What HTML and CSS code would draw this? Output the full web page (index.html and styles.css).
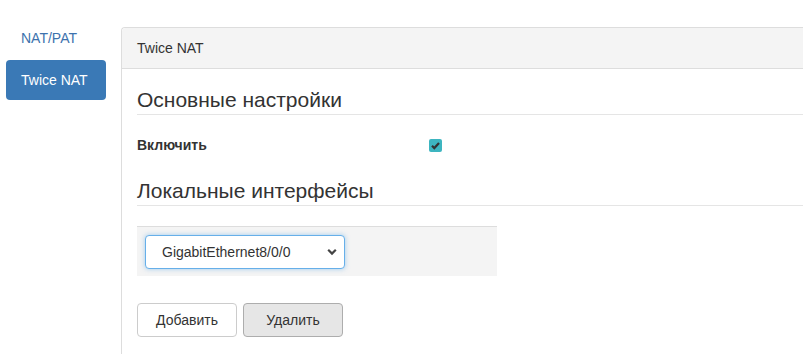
FILE: index.html
```html
<!DOCTYPE html>
<html lang="ru">
<head>
    <meta charset="UTF-8">
    <title>Twice NAT</title>
    <link rel="stylesheet" href="styles.css">
</head>
<body>
    <div class="layout">
        <nav class="sidebar">
            <a class="nav-link" href="#">NAT/PAT</a>
            <a class="nav-link active" href="#">Twice NAT</a>
        </nav>

        <div class="panel">
            <div class="panel-heading">Twice NAT</div>
            <div class="panel-body">
                <h3 class="section-title">Основные настройки</h3>
                <div class="form-row">
                    <label class="form-label">Включить</label>
                    <span class="checkbox checked">
                        <svg viewBox="0 0 13 13" width="13" height="13">
                            <path d="M3 6.8 L5.3 9.1 L10 3.9" fill="none" stroke="#333" stroke-width="2.2"/>
                        </svg>
                    </span>
                </div>

                <h3 class="section-title">Локальные интерфейсы</h3>
                <div class="iface-box">
                    <span class="select-wrap">
                        <select class="form-select">
                            <option>GigabitEthernet8/0/0</option>
                        </select>
                        <svg class="select-arrow" viewBox="0 0 10 8" width="10" height="8">
                            <path d="M1.2 1.8 L5 5.6 L8.8 1.8" fill="none" stroke="#444" stroke-width="2.2"/>
                        </svg>
                    </span>
                </div>

                <div class="actions">
                    <button class="btn">Добавить</button>
                    <button class="btn btn-pressed">Удалить</button>
                </div>
            </div>
        </div>
    </div>
</body>
</html>
```

FILE: styles.css
```css
/* Общие стили */
body {
    margin: 0;
    font-family: 'Liberation Sans', Arial, sans-serif;
    font-size: 14px;
    color: #333;
    background: #fff;
}

.layout {
    display: flex;
    align-items: flex-start;
}

/* --- Боковое меню --- */
.sidebar {
    width: 115px;
    padding: 28px 0 0 6px;
    display: flex;
    flex-direction: column;
    flex-shrink: 0;
}
.nav-link {
    display: block;
    width: 100px;
    box-sizing: border-box;
    padding: 0 15px;
    line-height: 20px;
    font-size: 14px;
    color: #3d72ad;
    text-decoration: none;
}
.nav-link.active {
    margin-top: 12px;
    line-height: 40px;
    background: #3a79b6;
    color: #fff;
    border-radius: 4px;
}

/* --- Панель --- */
.panel {
    flex: 1;
    margin-top: 27px;
    min-height: 327px;
    border-left: 1px solid #ddd;
    border-top: 1px solid #ddd;
    border-top-left-radius: 4px;
}
.panel-heading {
    height: 40px;
    line-height: 40px;
    padding: 0 15px;
    font-size: 14px;
    background: #f4f4f4;
    border-bottom: 1px solid #ddd;
    border-top-left-radius: 4px;
}
.panel-body {
    padding: 0 0 0 15px;
}

.section-title {
    margin: 20px 0 0;
    padding-bottom: 3px;
    font-size: 21px;
    font-weight: normal;
    line-height: 22px;
    border-bottom: 1px solid #e5e5e5;
}

.form-row {
    display: flex;
    align-items: center;
    height: 20px;
    margin: 20px 0 25px;
}
.form-label {
    width: 292px;
    font-size: 14px;
    font-weight: bold;
}
.checkbox {
    width: 13px;
    height: 13px;
    display: flex;
    border-radius: 2px;
    background: #3db5c0;
}

/* Блок выбора интерфейса */
.iface-box {
    width: 344px;
    margin-top: 20px;
    padding: 8px;
    padding-bottom: 7px;
    background: #f4f4f4;
    border-top: 1px solid #ddd;
}
.select-wrap {
    position: relative;
    display: inline-block;
    vertical-align: top;
}
.form-select {
    appearance: none;
    -webkit-appearance: none;
    display: block;
    width: 200px;
    height: 34px;
    padding: 0 0 0 16px;
    font-family: inherit;
    font-size: 14px;
    color: #333;
    background: #fff;
    border: 1px solid #66afe9;
    border-radius: 4px;
    box-shadow: 0 0 5px rgba(102, 175, 233, 0.6);
    outline: none;
}
.select-arrow {
    position: absolute;
    right: 8px;
    top: 13px;
    pointer-events: none;
}

/* Кнопки */
.actions {
    display: flex;
    gap: 6px;
    margin-top: 27px;
}
.btn {
    width: 100px;
    height: 34px;
    font-family: inherit;
    font-size: 14px;
    color: #333;
    background: #fff;
    border: 1px solid #ccc;
    border-radius: 4px;
    cursor: pointer;
}
.btn-pressed {
    background: #e6e6e6;
    border-color: #adadad;
}
```
